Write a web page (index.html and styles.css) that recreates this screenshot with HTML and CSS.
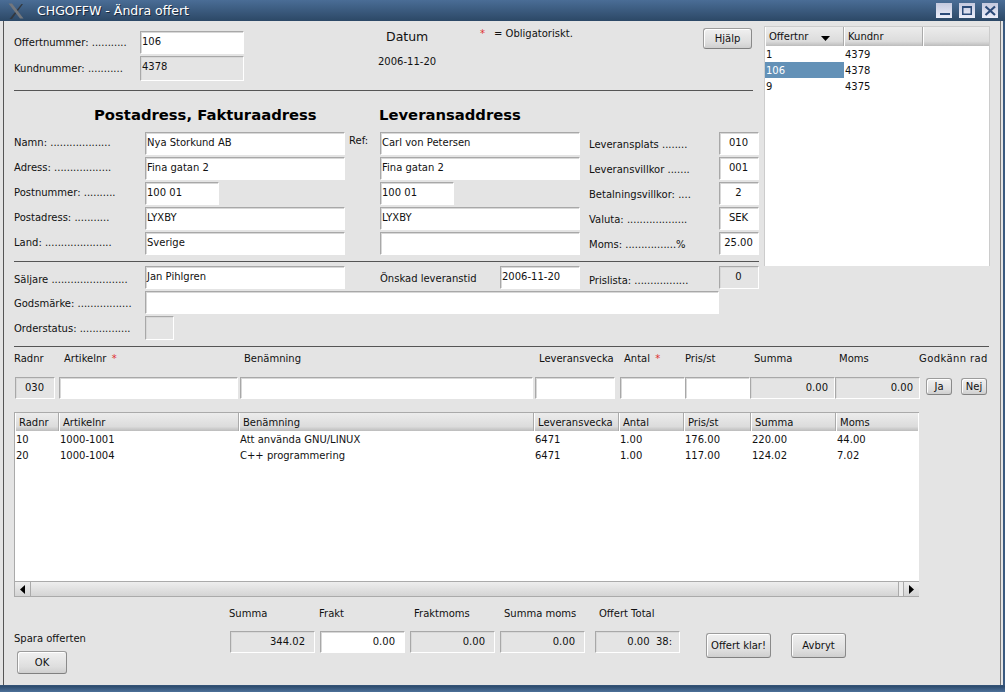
FILE: index.html
```html
<!doctype html>
<html lang="en">
  <head>
    <meta charset="UTF-8" />
    <meta name="viewport" content="width=device-width, initial-scale=1.0" />
    <title>CHGOFFW - Ändra offert</title>
    <link rel="stylesheet" href="styles.css">
  </head>
  <body>
    <div class="window">
      <div class="titlebar">
        <svg class="wm-logo" width="16" height="16" viewBox="0 0 16 16">
          <path d="M13.5 1 L15 1 L4 16 L1.5 16 Z" fill="#33383f" />
          <path d="M0.5 0.5 L4 0.5 L15.5 15.5 L12 15.5 Z" fill="#73777d" />
        </svg>
        <span class="title">CHGOFFW - Ändra offert</span>
        <div class="wm-buttons">
          <span class="wm-btn"><svg width="16" height="15" viewBox="0 0 16 15"><path d="M4 10h10v2H4z" fill="#2b4a78" /></svg></span>
          <span class="wm-btn"><svg width="16" height="15" viewBox="0 0 16 15"><path d="M3 3h10v9H3z M4.5 5v5.5h7V5z" fill="#2b4a78" fill-rule="evenodd" /></svg></span>
          <span class="wm-btn"><svg width="16" height="15" viewBox="0 0 16 15"><path d="M3.5 3.5 L13 12 M13 3.5 L3.5 12" stroke="#2b4a78" stroke-width="2.2" /></svg></span>
        </div>
      </div>

      <div class="content">
        <div class="top">
          <div class="main">
            <div class="head">
              <div class="head-ids">
                <div class="id-row"><span class="id-label">Offertnummer: ...........</span><div class="field id-field">106</div></div>
                <div class="id-row id-row-ro"><span class="id-label">Kundnummer: ...........</span><div class="field ro id-field">4378</div></div>
              </div>
              <div class="head-date">
                <div class="date-title">Datum</div>
                <div class="date-value">2006-11-20</div>
              </div>
              <div class="head-note"><span class="star">*</span><span>= Obligatoriskt.</span></div>
              <button class="btn help-btn">Hjälp</button>
            </div>
            <div class="rule rule-head"></div>

            <div class="addr-titles">
              <h2 class="addr-bill">Postadress, Fakturaadress</h2>
              <h2 class="addr-ship">Leveransaddress</h2>
            </div>

            <div class="addr-grid">
              <span class="lbl">Namn: ...................</span>
              <div class="field">Nya Storkund AB</div>
              <span class="lbl ref">Ref:</span>
              <div class="field">Carl von Petersen</div>
              <span class="lbl side">Leveransplats ........</span>
              <div class="field center">010</div>

              <span class="lbl">Adress: ..................</span>
              <div class="field">Fina gatan 2</div>
              <span></span>
              <div class="field">Fina gatan 2</div>
              <span class="lbl side">Leveransvillkor .......</span>
              <div class="field center">001</div>

              <span class="lbl">Postnummer: ..........</span>
              <div class="field short">100 01</div>
              <span></span>
              <div class="field short">100 01</div>
              <span class="lbl side">Betalningsvillkor: ....</span>
              <div class="field center">2</div>

              <span class="lbl">Postadress: ...........</span>
              <div class="field">LYXBY</div>
              <span></span>
              <div class="field">LYXBY</div>
              <span class="lbl side">Valuta: ...................</span>
              <div class="field center">SEK</div>

              <span class="lbl">Land: .....................</span>
              <div class="field">Sverige</div>
              <span></span>
              <div class="field"></div>
              <span class="lbl side">Moms: ................%</span>
              <div class="field center">25.00</div>
            </div>
          </div>

          <div class="offer-list">
            <table class="grid offers">
              <thead>
                <tr>
                  <th class="sorted">Offertnr<svg class="sort" width="9" height="5" viewBox="0 0 9 5"><path d="M0 0h9L4.5 5z" /></svg></th>
                  <th>Kundnr</th>
                  <th></th>
                </tr>
              </thead>
              <tbody>
                <tr><td>1</td><td>4379</td><td></td></tr>
                <tr><td class="sel">106</td><td>4378</td><td></td></tr>
                <tr><td>9</td><td>4375</td><td></td></tr>
              </tbody>
            </table>
          </div>
        </div>

        <div class="rule rule-seller"></div>

        <div class="meta-grid">
          <span class="lbl seller-lbl">Säljare ........................</span>
          <div class="field seller">Jan Pihlgren</div>
          <span class="lbl wish">Önskad leveranstid</span>
          <div class="field wish-field">2006-11-20</div>
          <span class="lbl side price-lbl">Prislista: .................</span>
          <div class="field ro center price-field">0</div>

          <span class="lbl first-col">Godsmärke: .................</span>
          <div class="field goods"></div>

          <span class="lbl first-col">Orderstatus: ................</span>
          <div class="field ro status"></div>
        </div>

        <div class="rule rule-rows"></div>

        <div class="entry">
          <span class="col-lbl">Radnr</span>
          <span class="col-lbl pad">Artikelnr <span class="star">*</span></span>
          <span class="col-lbl pad">Benämning</span>
          <span class="col-lbl pad">Leveransvecka</span>
          <span class="col-lbl pad">Antal <span class="star">*</span></span>
          <span class="col-lbl">Pris/st</span>
          <span class="col-lbl pad">Summa</span>
          <span class="col-lbl pad">Moms</span>
          <span class="col-lbl ok-lbl">Godkänn rad</span>

          <div class="field ro center rad-field">030</div>
          <div class="field art-field"></div>
          <div class="field ben-field"></div>
          <div class="field lev-field"></div>
          <div class="field"></div>
          <div class="field"></div>
          <div class="field ro right">0.00</div>
          <div class="field ro right">0.00</div>
          <div class="row-btns">
            <button class="btn small-btn">Ja</button>
            <button class="btn small-btn">Nej</button>
          </div>
        </div>

        <div class="lines">
          <table class="grid">
            <colgroup>
              <col class="c-rad"><col class="c-art"><col class="c-ben"><col class="c-lev"><col class="c-ant"><col class="c-pris"><col class="c-sum"><col class="c-moms">
            </colgroup>
            <thead>
              <tr><th>Radnr</th><th>Artikelnr</th><th>Benämning</th><th>Leveransvecka</th><th>Antal</th><th>Pris/st</th><th>Summa</th><th>Moms</th></tr>
            </thead>
            <tbody>
              <tr><td>10</td><td>1000-1001</td><td>Att använda GNU/LINUX</td><td>6471</td><td>1.00</td><td>176.00</td><td>220.00</td><td>44.00</td></tr>
              <tr><td>20</td><td>1000-1004</td><td>C++ programmering</td><td>6471</td><td>1.00</td><td>117.00</td><td>124.02</td><td>7.02</td></tr>
            </tbody>
          </table>
          <div class="scrollbar">
            <span class="arrow"><svg width="5" height="9" viewBox="0 0 5 9"><path d="M5 0v9L0 4.5z" /></svg></span>
            <span class="track"></span>
            <span class="thumb"></span>
            <span class="arrow"><svg width="5" height="9" viewBox="0 0 5 9"><path d="M0 0v9l5-4.5z" /></svg></span>
          </div>
        </div>

        <div class="footer">
          <div class="save">
            <div class="save-lbl">Spara offerten</div>
            <button class="btn ok-btn">OK</button>
          </div>
          <div class="totals">
            <div class="total"><span class="first">Summa</span><div class="field ro right">344.02</div></div>
            <div class="total"><span class="first">Frakt</span><div class="field right">0.00</div></div>
            <div class="total"><span>Fraktmoms</span><div class="field ro right">0.00</div></div>
            <div class="total"><span>Summa moms</span><div class="field ro right">0.00</div></div>
            <div class="total last"><span>Offert Total</span><div class="field ro right">0.00&nbsp; 38:</div></div>
          </div>
          <div class="actions">
            <button class="btn done-btn">Offert klar!</button>
            <button class="btn cancel-btn">Avbryt</button>
          </div>
        </div>
      </div>
    </div>
  </body>
</html>
```

FILE: styles.css
```css
* {
  box-sizing: border-box;
}

body {
  margin: 0;
  padding: 0;
  background-color: #3d5f86;
  font-family: "DejaVu Sans", sans-serif;
  font-size: 10px;
  color: #111;
}

.window {
  width: 1005px;
  height: 692px;
  display: flex;
  flex-direction: column;
  overflow: hidden;
  background: linear-gradient(#3a5a80 0, #3a5a80 685px, #2c4a6c 686px, #4d7099 692px);
}

/* window manager bar */
.titlebar {
  height: 21px;
  flex: none;
  display: flex;
  align-items: center;
  padding: 0 7px 0 8px;
  background: linear-gradient(#4a6d96, #2c4866);
  color: #fff;
  font-size: 12.5px;
}

.wm-logo {
  margin-right: 13px;
}

.title {
  flex: 1;
  text-shadow: 1px 1px 0 #1c2c40;
}

.wm-buttons {
  display: flex;
  gap: 7px;
}

.wm-btn {
  width: 16px;
  height: 15px;
  background: linear-gradient(#c4c9de, #eceefa);
  display: block;
}

.content {
  width: 1003px;
  height: 664px;
  flex: none;
  padding: 0 0 0 14px;
  background-color: #e4e4e4;
  box-shadow: inset 3px 0 0 #e4e4e4, inset 4px 0 0 #555, inset -2px 0 0 #e4e4e4, inset -3px 0 0 #777;
}

.top {
  display: flex;
  height: 240px;
}

.main {
  width: 750px;
  flex: none;
}

.offer-list {
  margin-top: 5px;
  width: 226px;
  height: 240px;
  background-color: #fff;
  border: 1px solid #ccc;
  border-bottom: none;
}

/* header block */
.head {
  display: flex;
  height: 69px;
  padding-top: 9px;
}

.head-ids {
  width: 230px;
  flex: none;
}

.id-row {
  display: flex;
  align-items: center;
  height: 25px;
}

.id-row-ro {
  margin-top: 1px;
}

.id-label {
  width: 126px;
  flex: none;
}

.id-field {
  width: 104px;
  height: 23px;
}

.id-row-ro .id-field {
  height: 25px;
}

.head-date {
  width: 100px;
  flex: none;
  margin-left: 134px;
  margin-top: -1px;
}

.date-title {
  font-size: 12.5px;
  margin: 0 0 0 8px;
}

.date-value {
  margin-top: 12px;
}

.head-note {
  width: 225px;
  flex: none;
  display: flex;
  gap: 9px;
  padding-left: 2px;
  height: 14px;
  margin-top: -2px;
}

.star {
  color: #e03030;
}

.rule {
  height: 1px;
  background-color: #555;
}

.rule-head {
  width: 739px;
}

.addr-titles {
  display: flex;
  height: 41px;
  padding-top: 15px;
}

h2 {
  margin: 0;
  font-size: 14.8px;
  font-weight: bold;
  color: #000;
}

.addr-bill {
  width: 365px;
  padding-left: 80px;
  white-space: nowrap;
}

.addr-grid {
  display: grid;
  grid-template-columns: 131px 200px 35px 200px 139px 40px;
  grid-auto-rows: 25px;
  align-items: start;
  width: 745px;
}

.lbl {
  white-space: nowrap;
  padding-top: 5px;
}

.ref {
  font-size: 10px;
  padding-left: 4px;
  padding-top: 3px;
}

.side {
  padding-left: 9px;
  padding-top: 7px;
}

/* inset text field */
.field {
  height: 23px;
  line-height: 19px;
  padding: 0 2px 0 1px;
  background-color: #fff;
  border: 1px solid;
  border-color: #a8a8a8 #fff #fff #a8a8a8;
  box-shadow: inset 1px 1px 0 #d8d8d8;
  white-space: nowrap;
  overflow: hidden;
}

.field.ro {
  background-color: #e4e4e4;
}

.short {
  width: 74px;
}

.center {
  text-align: center;
}

.right {
  text-align: right;
  padding-right: 6px;
}

/* tables */
.grid {
  width: 100%;
  border-collapse: separate;
  border-spacing: 0;
  table-layout: fixed;
}

.grid th {
  height: 19px;
  padding: 0 0 0 3px;
  font-weight: normal;
  text-align: left;
  background: linear-gradient(#ececec, #dcdcdc 75%, #bcbcbc);
  border-right: 1px solid #aaa;
  border-left: 1px solid #fff;
  white-space: nowrap;
}

.lines .grid th {
  height: 18px;
}

.grid th:last-child {
  border-right: none;
}

.grid td {
  height: 16px;
  padding: 0 0 0 1px;
  white-space: nowrap;
}

.offers th:first-child {
  width: 79px;
}

.offers th:nth-child(2) {
  width: 79px;
}

.sort {
  margin-left: 13px;
  vertical-align: -1px;
}

.sel {
  background-color: #6391b7;
  color: #fff;
}

/* seller block */
.rule-seller {
  width: 745px;
}

.meta-grid {
  display: grid;
  grid-template-columns: 131px 200px 35px 120px 80px 139px 40px;
  grid-auto-rows: 25px;
  align-items: start;
  padding-top: 4px;
  width: 745px;
}

.first-col {
  grid-column: 1;
}

.meta-grid .lbl {
  padding-top: 7px;
}

.meta-grid .seller-lbl {
  padding-top: 8px;
}

.seller {
  grid-column: 2;
}

.wish {
  grid-column: 4;
}

.wish-field {
  grid-column: 5;
}

.meta-grid .price-lbl {
  grid-column: 6;
  padding-top: 9px;
}

.price-field {
  grid-column: 7;
}

.goods {
  grid-column: 2 / 7;
}

.status {
  grid-column: 2;
  width: 29px;
  height: 24px;
}

/* row entry */
.rule-rows {
  width: 975px;
  margin-top: 5px;
}

.entry {
  display: grid;
  grid-template-columns: 46px 180px 295px 85px 65px 65px 85px 85px 70px;
  grid-template-rows: 23px 23px;
  row-gap: 7px;
  width: 985px;
}

.entry .field {
  height: 22px;
}

.col-lbl {
  white-space: nowrap;
  align-self: center;
}

.col-lbl.pad {
  padding-left: 4px;
}

.col-lbl .star {
  margin-left: 2px;
}

.ok-lbl {
  letter-spacing: 0.4px;
  margin-left: -1px;
}

.rad-field {
  margin-left: 1px;
  width: 40px;
}

.art-field {
  margin-left: -1px;
  width: 179px;
}

.ben-field {
  width: 293px;
}

.lev-field {
  width: 80px;
}

.row-btns {
  display: flex;
  gap: 9px;
  padding: 1px 0 0 6px;
}

/* buttons */
.btn {
  font: inherit;
  color: #111;
  padding: 0;
  background: linear-gradient(#f0f0f0, #dedede 70%, #cfcfcf);
  border: 1px solid #9c9c9c;
  border-right-color: #8a8a8a;
  border-bottom-color: #808080;
  border-radius: 3px;
  box-shadow: inset 1px 1px 0 #fff;
}

.help-btn {
  width: 49px;
  height: 21px;
  margin-top: -2px;
}

.small-btn {
  width: 26px;
  height: 17px;
}

.ok-btn {
  width: 50px;
  height: 23px;
  margin: 4px 0 0 3px;
}

.done-btn {
  width: 65px;
  height: 25px;
}

.cancel-btn {
  width: 55px;
  height: 25px;
}

/* lines table */
.lines {
  width: 905px;
  height: 185px;
  margin-top: 12px;
  display: flex;
  flex-direction: column;
  background-color: #fff;
  border-top: 1px solid #aaa;
  border-left: 1px solid #aaa;
}

.lines .grid {
  flex: 1;
  display: block;
}

.c-rad { width: 44px; }
.c-art { width: 180px; }
.c-ben { width: 295px; }
.c-lev { width: 85px; }
.c-ant { width: 65px; }
.c-pris { width: 67px; }
.c-sum { width: 85px; }
.c-moms { width: 82px; }

.scrollbar {
  height: 16px;
  flex: none;
  display: flex;
  background: linear-gradient(#eeeeee, #d4d4d4);
  border-top: 1px solid #aaa;
  border-bottom: 1px solid #aaa;
}

.arrow {
  width: 15px;
  display: flex;
  align-items: center;
  justify-content: center;
}

.track {
  flex: 1;
  border-left: 1px solid #aaa;
}

.thumb {
  width: 6px;
  background-color: #ececec;
  border-left: 1px solid #aaa;
  border-right: 1px solid #aaa;
}

/* footer */
.footer {
  display: flex;
  margin-top: 11px;
}

.save {
  width: 216px;
  flex: none;
  padding-top: 25px;
}

.save-lbl {
  height: 14px;
}

.totals {
  display: flex;
  gap: 5px;
}

.total {
  width: 85px;
  display: flex;
  flex-direction: column;
  gap: 10px;
}

.total .field {
  height: 22px;
}

.total .right {
  padding-right: 9px;
}

.total.last {
  margin-left: 5px;
}

.total.last .right {
  padding-right: 7px;
}

.total span {
  height: 13px;
  padding-left: 4px;
  white-space: nowrap;
}

.total span.first {
  padding-left: 0;
  margin-left: -1px;
}

.actions {
  display: flex;
  gap: 20px;
  margin: 25px 0 0 26px;
}
```
